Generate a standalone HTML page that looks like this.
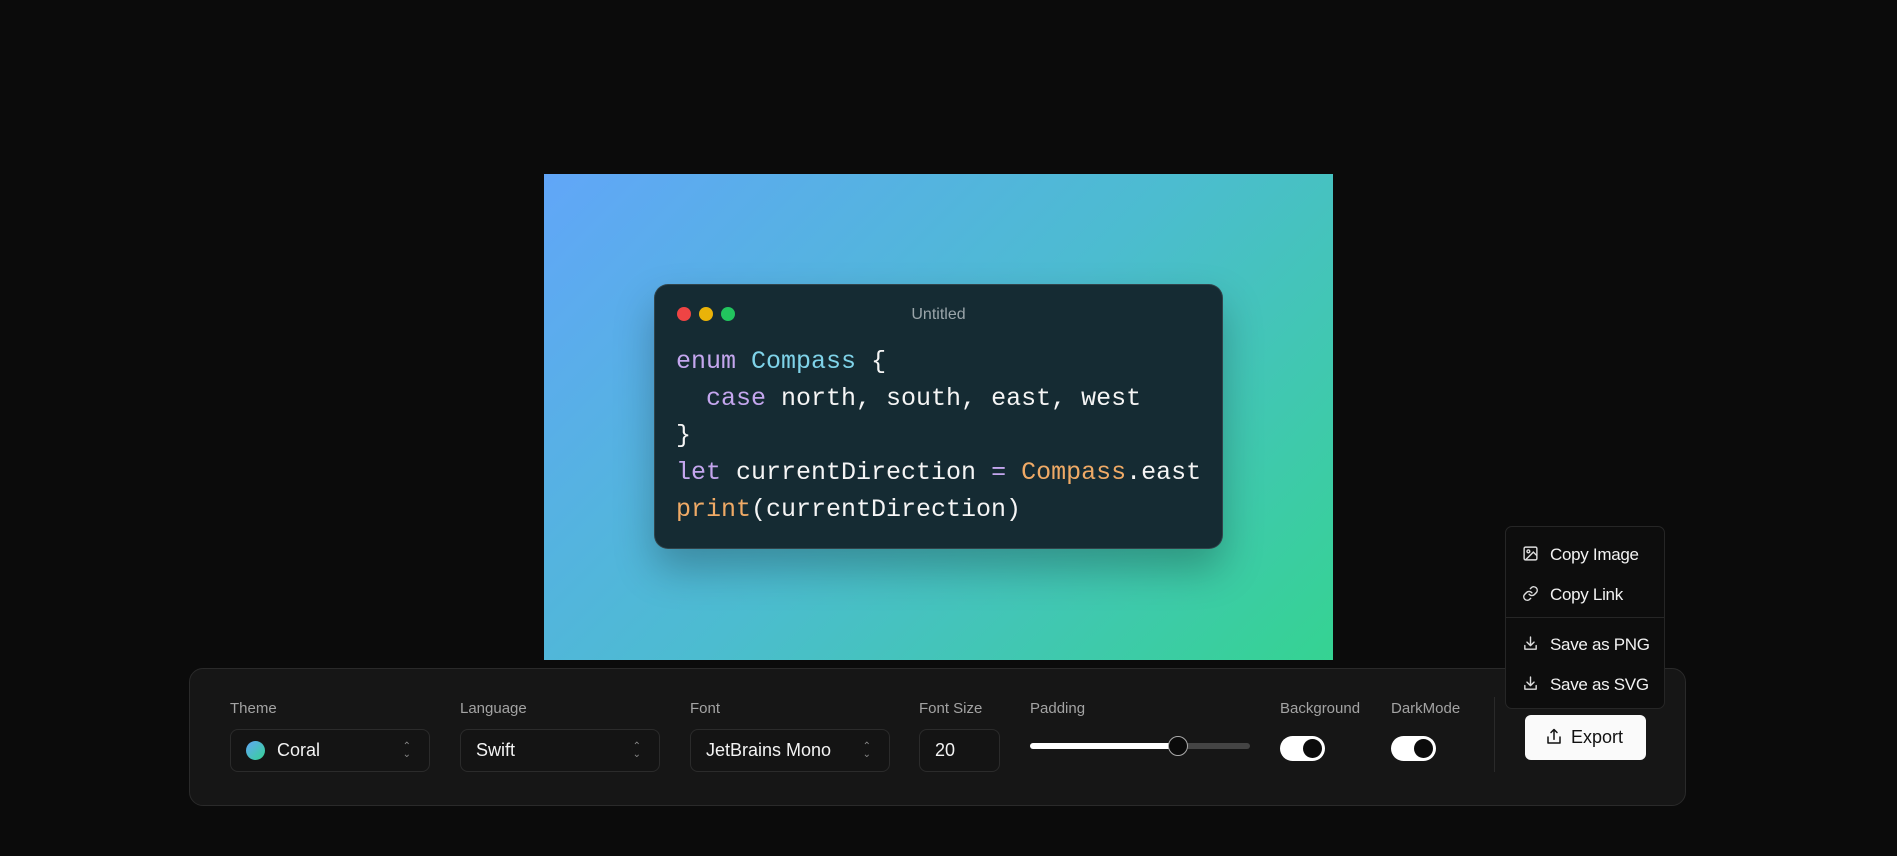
<!DOCTYPE html>
<html><head><meta charset="utf-8"><style>
*{box-sizing:border-box;margin:0;padding:0}
body{width:1897px;height:856px;background:#0b0b0b;position:relative;overflow:hidden;font-family:"Liberation Sans",sans-serif;color:#fff}
.bg{position:absolute;left:544px;top:174px;width:789px;height:486px;background:linear-gradient(135deg,#61a6f8 0%,#4cbcd0 50%,#35d392 100%)}
.card{position:absolute;left:654px;top:284px;width:569px;height:265px;background:#152b33;border:1px solid rgba(255,255,255,.12);border-radius:14px;box-shadow:0 20px 40px rgba(0,0,0,.25)}
.dot{position:absolute;top:22px;width:14px;height:14px;border-radius:50%}
.title{position:absolute;top:21px;left:0;right:0;text-align:center;color:#9aa5aa;font-size:16px}
pre{position:absolute;left:21px;top:58px;font-family:"Liberation Mono",monospace;font-size:25px;line-height:37px;color:#f5f5f5}
.p{color:#c4a6ee}.c{color:#7fd3e9}.o{color:#efaa66}
.panel{position:absolute;left:189px;top:668px;width:1497px;height:138px;background:#161616;border:1px solid #2a2a2a;border-radius:14px}
.lbl{position:absolute;top:700px;font-size:15px;color:#a3a3a3}
.inp{position:absolute;top:729px;height:43px;border:1px solid #2b2b2b;border-radius:8px;background:#141414;font-size:18px;color:#f3f3f3;line-height:41px;padding-left:15px}
.arr{position:absolute;right:18px;top:0;font-size:10px;color:#888;line-height:8px;padding-top:13px;text-align:center}
.track{position:absolute;left:1030px;top:743px;width:220px;height:6px;border-radius:3px;background:#444}
.fill{position:absolute;left:1030px;top:743px;width:148px;height:6px;border-radius:3px;background:#fff}
.thumb{position:absolute;left:1168px;top:736px;width:20px;height:20px;border-radius:50%;background:#0b0b0b;border:1px solid #aaa}
.tog{position:absolute;top:736px;width:45px;height:25px;border-radius:13px;background:#fff}
.tog::after{content:"";position:absolute;right:3px;top:3px;width:19px;height:19px;border-radius:50%;background:#0b0b0b}
.div{position:absolute;left:1494px;top:697px;width:1px;height:75px;background:#2a2a2a}
.btn{position:absolute;left:1525px;top:715px;width:121px;height:45px;background:#fafafa;border-radius:6px;color:#111;font-size:18px;line-height:45px;padding-left:46px}
.menu{position:absolute;left:1505px;top:526px;width:160px;height:183px;background:#0d0d0d;border:1px solid #262626;border-radius:7px}
.mi{position:absolute;left:44px;font-size:17px;color:#f2f2f2;letter-spacing:-0.3px}
.ic{position:absolute;left:16px}
</style></head><body>
<div class="bg"></div>
<div class="card">
<div class="dot" style="left:22px;background:#ef4444"></div>
<div class="dot" style="left:44px;background:#eab308"></div>
<div class="dot" style="left:66px;background:#22c55e"></div>
<div class="title">Untitled</div>
<pre><span class="p">enum</span> <span class="c">Compass</span> {
  <span class="p">case</span> north, south, east, west
}
<span class="p">let</span> currentDirection <span class="p">=</span> <span class="o">Compass</span>.east
<span class="o">print</span>(currentDirection)</pre>
</div>
<div class="panel"></div>
<div class="lbl" style="left:230px">Theme</div>
<div class="lbl" style="left:460px">Language</div>
<div class="lbl" style="left:690px">Font</div>
<div class="lbl" style="left:919px">Font Size</div>
<div class="lbl" style="left:1030px">Padding</div>
<div class="lbl" style="left:1280px">Background</div>
<div class="lbl" style="left:1391px">DarkMode</div>
<div class="inp" style="left:230px;width:200px;padding-left:46px"><span style="position:absolute;left:15px;top:11px;width:19px;height:19px;border-radius:50%;background:linear-gradient(135deg,#61a6f8,#35d392)"></span>Coral<div class="arr">&#8963;<br>&#8964;</div></div>
<div class="inp" style="left:460px;width:200px">Swift<div class="arr">&#8963;<br>&#8964;</div></div>
<div class="inp" style="left:690px;width:200px">JetBrains Mono<div class="arr">&#8963;<br>&#8964;</div></div>
<div class="inp" style="left:919px;width:81px">20</div>
<div class="track"></div><div class="fill"></div><div class="thumb"></div>
<div class="tog" style="left:1280px"></div>
<div class="tog" style="left:1391px"></div>
<div class="div"></div>
<div class="btn"><svg style="position:absolute;left:20px;top:13px" width="18" height="18" viewBox="0 0 24 24" fill="none" stroke="#111" stroke-width="2" stroke-linecap="round" stroke-linejoin="round"><path d="M4 12v8h16v-8M16 6l-4-4-4 4M12 2v13"/></svg>Export</div>
<div class="menu">
<svg class="ic" style="top:18px" width="17" height="17" viewBox="0 0 24 24" fill="none" stroke="#ddd" stroke-width="2"><rect x="3" y="3" width="18" height="18" rx="2"/><circle cx="9" cy="9" r="2"/><path d="M21 15l-5-5L5 21"/></svg>
<div class="mi" style="top:18px">Copy Image</div>
<svg class="ic" style="top:58px" width="17" height="17" viewBox="0 0 24 24" fill="none" stroke="#ddd" stroke-width="2" stroke-linecap="round"><path d="M10 13a5 5 0 0 0 7.5.5l3-3a5 5 0 0 0-7-7l-1.7 1.7"/><path d="M14 11a5 5 0 0 0-7.5-.5l-3 3a5 5 0 0 0 7 7l1.7-1.7"/></svg>
<div class="mi" style="top:58px">Copy Link</div>
<div style="position:absolute;left:0;right:0;top:90px;height:1px;background:#262626"></div>
<svg class="ic" style="top:108px" width="17" height="17" viewBox="0 0 24 24" fill="none" stroke="#ddd" stroke-width="2" stroke-linecap="round" stroke-linejoin="round"><path d="M4 15v5h16v-5M7 10l5 5 5-5M12 15V3"/></svg>
<div class="mi" style="top:108px">Save as PNG</div>
<svg class="ic" style="top:148px" width="17" height="17" viewBox="0 0 24 24" fill="none" stroke="#ddd" stroke-width="2" stroke-linecap="round" stroke-linejoin="round"><path d="M4 15v5h16v-5M7 10l5 5 5-5M12 15V3"/></svg>
<div class="mi" style="top:148px">Save as SVG</div>
</div>
</body></html>
